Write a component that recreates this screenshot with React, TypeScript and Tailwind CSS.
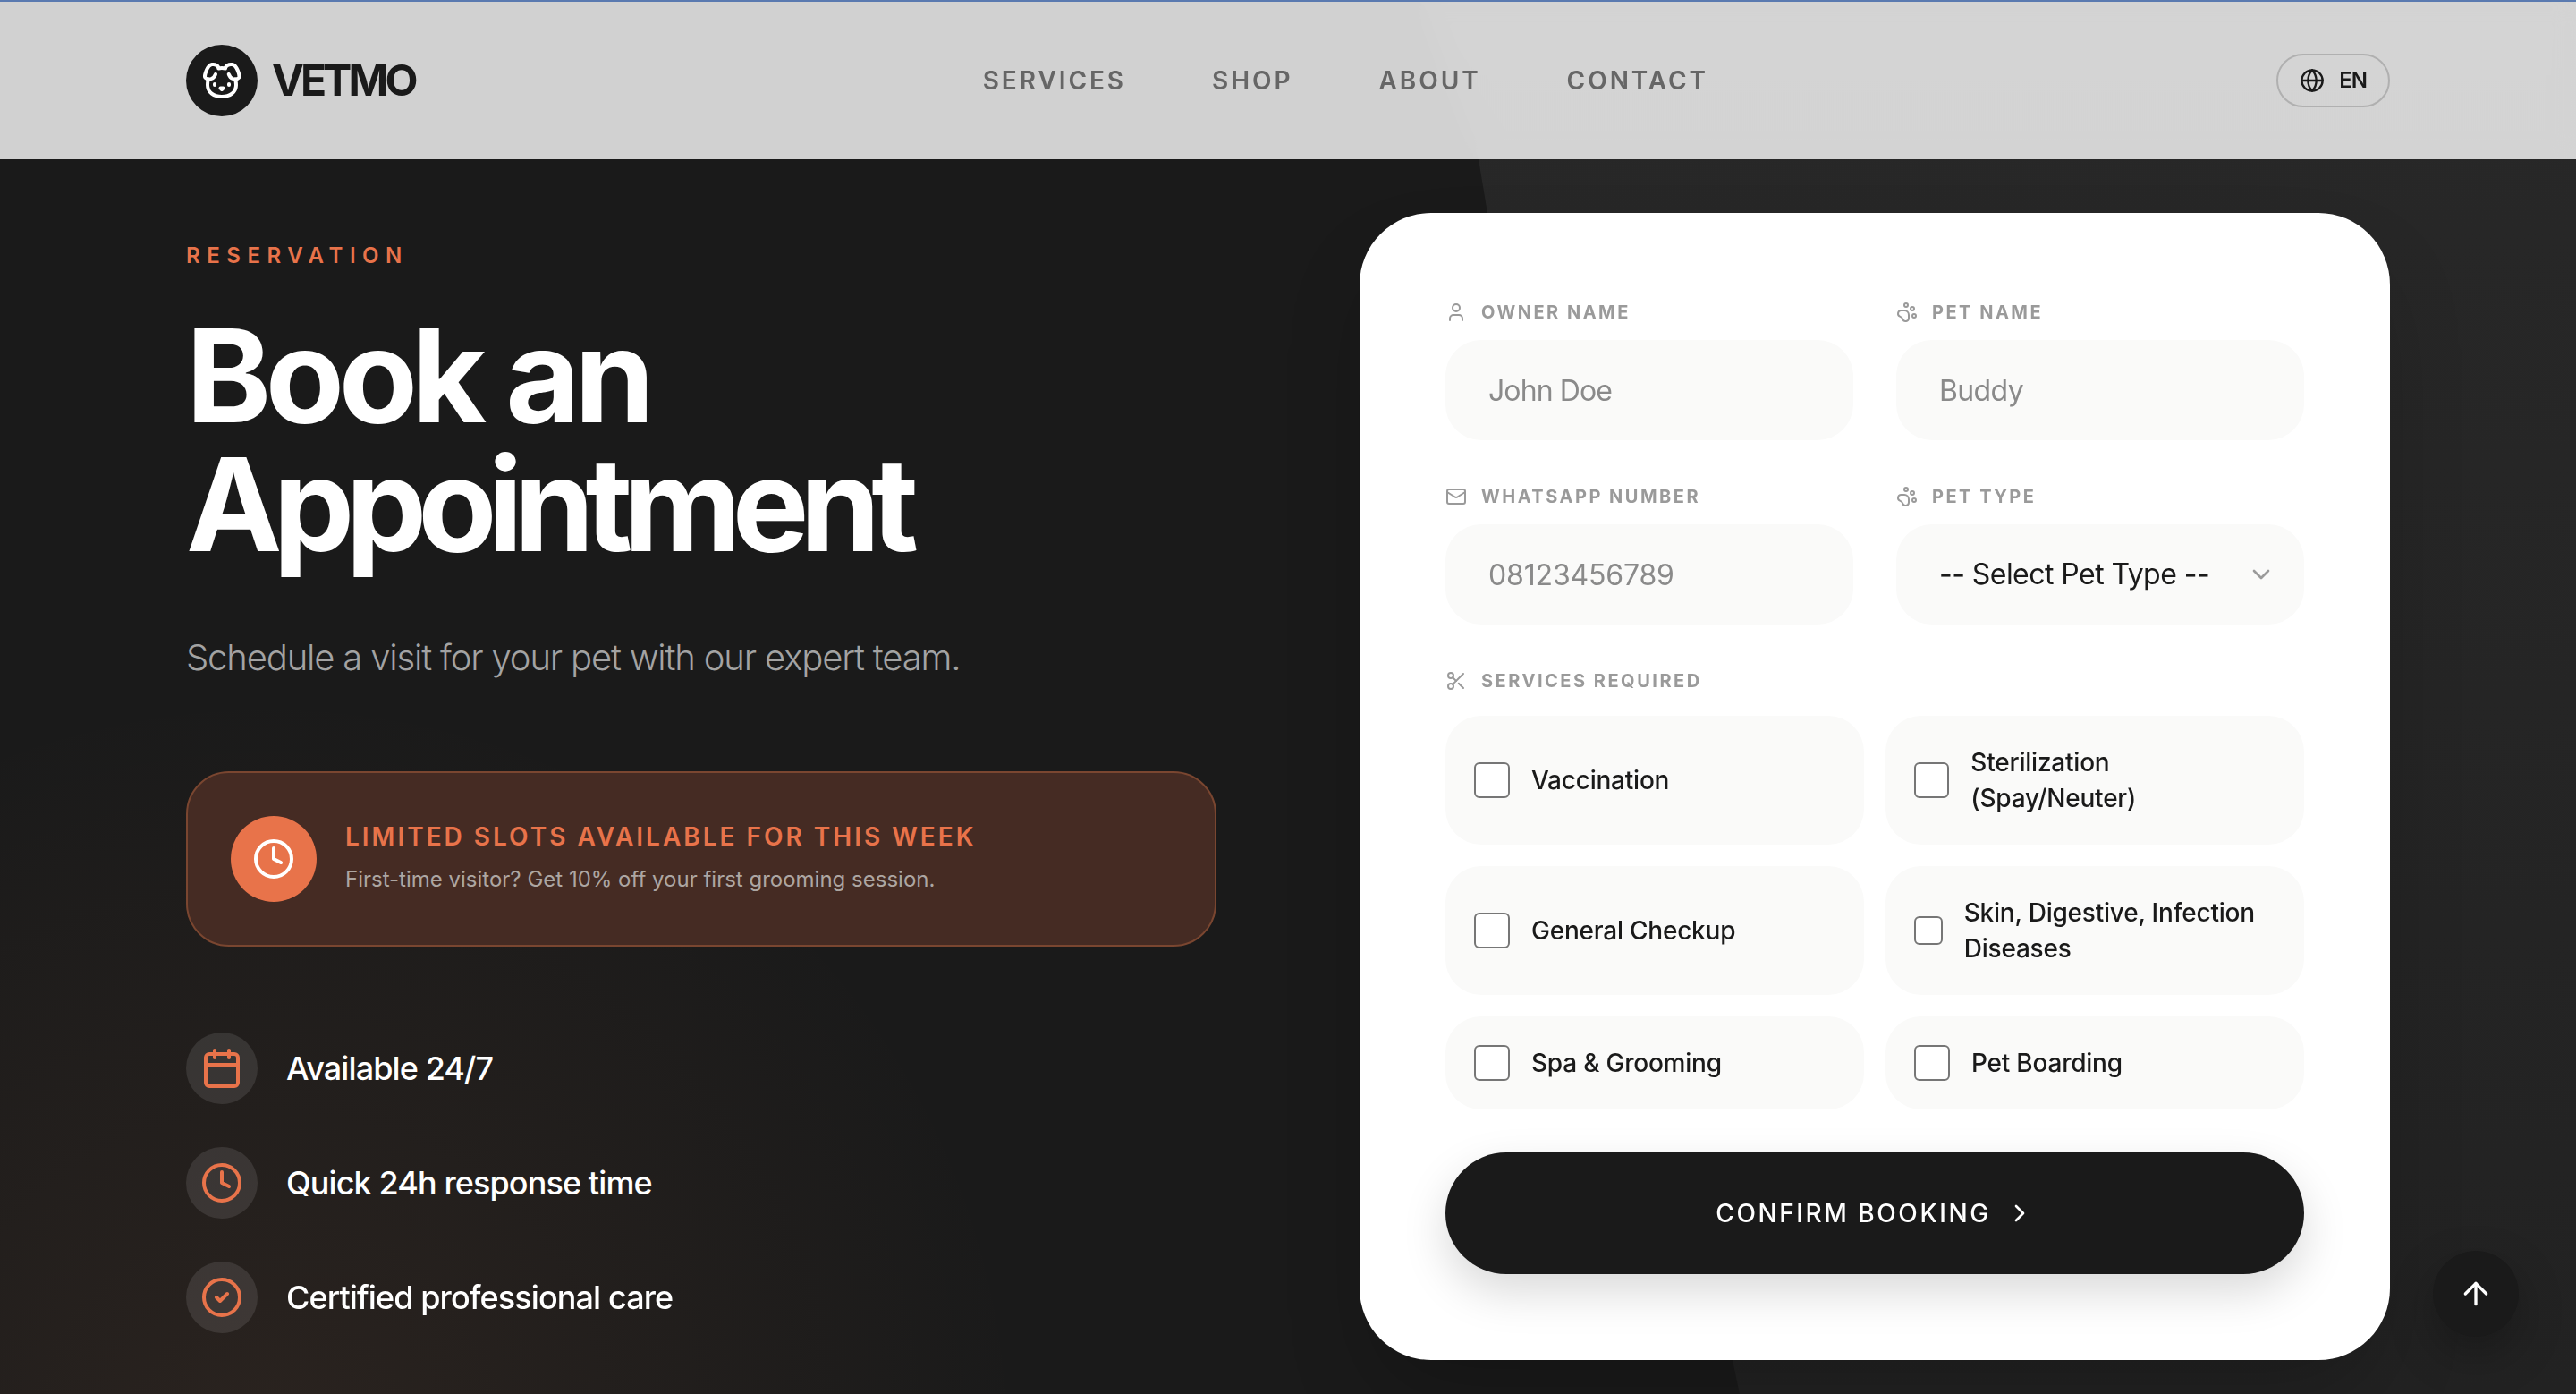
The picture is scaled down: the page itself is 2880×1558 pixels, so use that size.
import React from 'react';
import {
  Dog,
  Globe,
  Clock,
  Calendar,
  CircleCheck,
  User,
  PawPrint,
  Mail,
  Scissors,
  ChevronDown,
  ChevronRight,
  ArrowUp,
} from 'lucide-react';

const navLinks = ['SERVICES', 'SHOP', 'ABOUT', 'CONTACT'];

const services = [
  'Vaccination',
  'Sterilization (Spay/Neuter)',
  'General Checkup',
  'Skin, Digestive, Infection Diseases',
  'Spa & Grooming',
  'Pet Boarding',
];

const features = [
  { icon: Calendar, text: 'Available 24/7' },
  { icon: Clock, text: 'Quick 24h response time' },
  { icon: CircleCheck, text: 'Certified professional care' },
];

function FieldLabel({ icon: Icon, text }: { icon: React.ElementType; text: string }) {
  return (
    <label className="flex items-center gap-4 h-7 pb-[2px] text-[20px] font-bold tracking-[0.125em] text-[#9a9a9a]">
      <Icon className="w-6 h-6 shrink-0 text-[#9a9a9a]" strokeWidth={2} />
      {text}
    </label>
  );
}

function TextField({
  icon,
  label,
  placeholder,
  tracking,
}: {
  icon: React.ElementType;
  label: string;
  placeholder: string;
  tracking: string;
}) {
  return (
    <div className="flex flex-col gap-4">
      <FieldLabel icon={icon} text={label} />
      <input
        type="text"
        placeholder={placeholder}
        className={`w-full h-[112px] px-12 rounded-[40px] bg-[#fafaf9] text-[32px] text-[#1a1a1a] placeholder:text-[#8a8a8a] outline-none ${tracking}`}
      />
    </div>
  );
}

export default function App() {
  return (
    <div className="relative h-screen overflow-hidden bg-[#1a1a1a] font-[Inter,sans-serif]">
      {/* fondo decorativo */}
      <div className="absolute inset-0 bg-[radial-gradient(circle_at_300px_1620px,rgba(232,140,90,0.08),transparent_850px)]" />
      <div className="absolute inset-0 bg-[linear-gradient(180deg,#282828,#222222)] [clip-path:polygon(1587px_0,1653px_178px,1663px_238px,1937px_1520px,1945px_1558px,2880px_1558px,2880px_0)]" />

      <header className="relative z-10 h-[178px] px-[208px] flex items-center justify-between border-t-2 border-[#5a7ab0] bg-white/80 backdrop-blur-md">
        <div className="flex items-center gap-4">
          <div className="w-20 h-20 rounded-full bg-[#1a1a1a] flex items-center justify-center">
            <Dog className="w-12 h-12 text-white" strokeWidth={2} />
          </div>
          <span className="text-[48px] font-bold tracking-[-0.08em] text-[#1a1a1a]">VETMO</span>
        </div>

        <nav className="flex items-center gap-[96px]">
          {navLinks.map((link) => (
            <a key={link} className="text-[28px] font-semibold tracking-[0.105em] text-[#666666]">
              {link}
            </a>
          ))}
        </nav>

        <button className="h-[60px] px-6 flex items-center gap-4 rounded-full border-2 border-[#b0b0b0] text-[24px] font-semibold tracking-[-0.04em] text-[#1a1a1a]">
          <Globe className="w-7 h-7" strokeWidth={2} />
          EN
        </button>
      </header>

      <main className="relative z-10 px-[208px] pt-[60px] grid grid-cols-2 gap-[160px]">
        {/* columna izquierda */}
        <div className="pt-8">
          <p className="text-[24px] leading-8 font-semibold tracking-[0.315em] text-[#e8734a]">RESERVATION</p>
          <h1 className="mt-[46px] text-[144px] leading-[144px] font-bold text-white">
            <span className="block tracking-[-0.045em]">Book an</span>
            <span className="block tracking-[-0.069em]">Appointment</span>
          </h1>
          <p className="mt-[71px] text-[40px] leading-[56px] font-light tracking-[-0.029em] text-[#a3a3a3]">
            Schedule a visit for your pet with our expert team.
          </p>

          <div className="mt-[99px] p-12 flex items-center gap-8 rounded-[48px] border-2 border-[#7a4630] bg-[#452b23]">
            <div className="w-24 h-24 shrink-0 rounded-full bg-[#e8734a] flex items-center justify-center">
              <Clock className="w-12 h-12 text-white" strokeWidth={2} />
            </div>
            <div className="flex flex-col gap-3 pb-[6px]">
              <p className="text-[28px] leading-10 font-semibold tracking-[0.107em] text-[#e8734a]">
                LIMITED SLOTS AVAILABLE FOR THIS WEEK
              </p>
              <p className="text-[24px] leading-8 text-[#ada6a2]">
                First-time visitor? Get 10% off your first grooming session.
              </p>
            </div>
          </div>

          <ul className="mt-24 flex flex-col gap-12">
            {features.map(({ icon: Icon, text }) => (
              <li key={text} className="flex items-center gap-8">
                <div className="w-20 h-20 rounded-full bg-white/10 flex items-center justify-center">
                  <Icon className="w-12 h-12 text-[#e8734a]" strokeWidth={2} />
                </div>
                <span className="text-[36px] font-medium tracking-[-0.025em] text-white">{text}</span>
              </li>
            ))}
          </ul>
        </div>

        {/* formulario */}
        <div className="h-[1282px] px-24 pt-[98px] rounded-[80px] bg-white shadow-[0_50px_100px_-24px_rgba(0,0,0,0.25)]">
          <div className="grid grid-cols-2 gap-x-12 gap-y-[50px]">
            <TextField icon={User} label="OWNER NAME" placeholder="John Doe" tracking="tracking-[-0.028em]" />
            <TextField icon={PawPrint} label="PET NAME" placeholder="Buddy" tracking="tracking-[-0.02em]" />
            <TextField icon={Mail} label="WHATSAPP NUMBER" placeholder="08123456789" tracking="tracking-[-0.005em]" />
            <div className="flex flex-col gap-4">
              <FieldLabel icon={PawPrint} text="PET TYPE" />
              <div className="relative">
                <select className="w-full h-[112px] px-12 rounded-[40px] bg-[#fafaf9] text-[32px] tracking-[-0.017em] text-[#1a1a1a] appearance-none outline-none">
                  <option>-- Select Pet Type --</option>
                </select>
                <ChevronDown className="absolute right-[32px] top-[40px] w-8 h-8 text-[#9a9a9a]" strokeWidth={2} />
              </div>
            </div>
          </div>

          <div className="mt-[50px]">
            <FieldLabel icon={Scissors} text="SERVICES REQUIRED" />
          </div>
          <div className="mt-6 grid grid-cols-2 gap-6">
            {services.map((service) => (
              <label key={service} className="flex items-center gap-6 p-8 rounded-[40px] bg-[#fafaf9]">
                <input
                  type="checkbox"
                  className="w-10 min-w-0 aspect-square appearance-none rounded-[6px] border-2 border-[#767676] bg-white"
                />
                <span className="text-[28px] leading-10 font-medium tracking-[-0.008em] text-[#1a1a1a]">{service}</span>
              </label>
            ))}
          </div>

          <button className="mt-12 w-full h-[136px] flex items-center justify-center gap-4 rounded-full bg-[#1a1a1a] text-white text-[28px] font-medium tracking-[0.092em] shadow-[0_20px_50px_rgba(0,0,0,0.15)]">
            CONFIRM BOOKING
            <ChevronRight className="w-8 h-8" strokeWidth={2} />
          </button>
        </div>
      </main>

      <button className="fixed z-20 right-16 bottom-16 w-24 h-24 rounded-full bg-[#1a1a1a] flex items-center justify-center text-white shadow-[0_20px_50px_rgba(0,0,0,0.25)]">
        <ArrowUp className="w-10 h-10" strokeWidth={2} />
      </button>
    </div>
  );
}
